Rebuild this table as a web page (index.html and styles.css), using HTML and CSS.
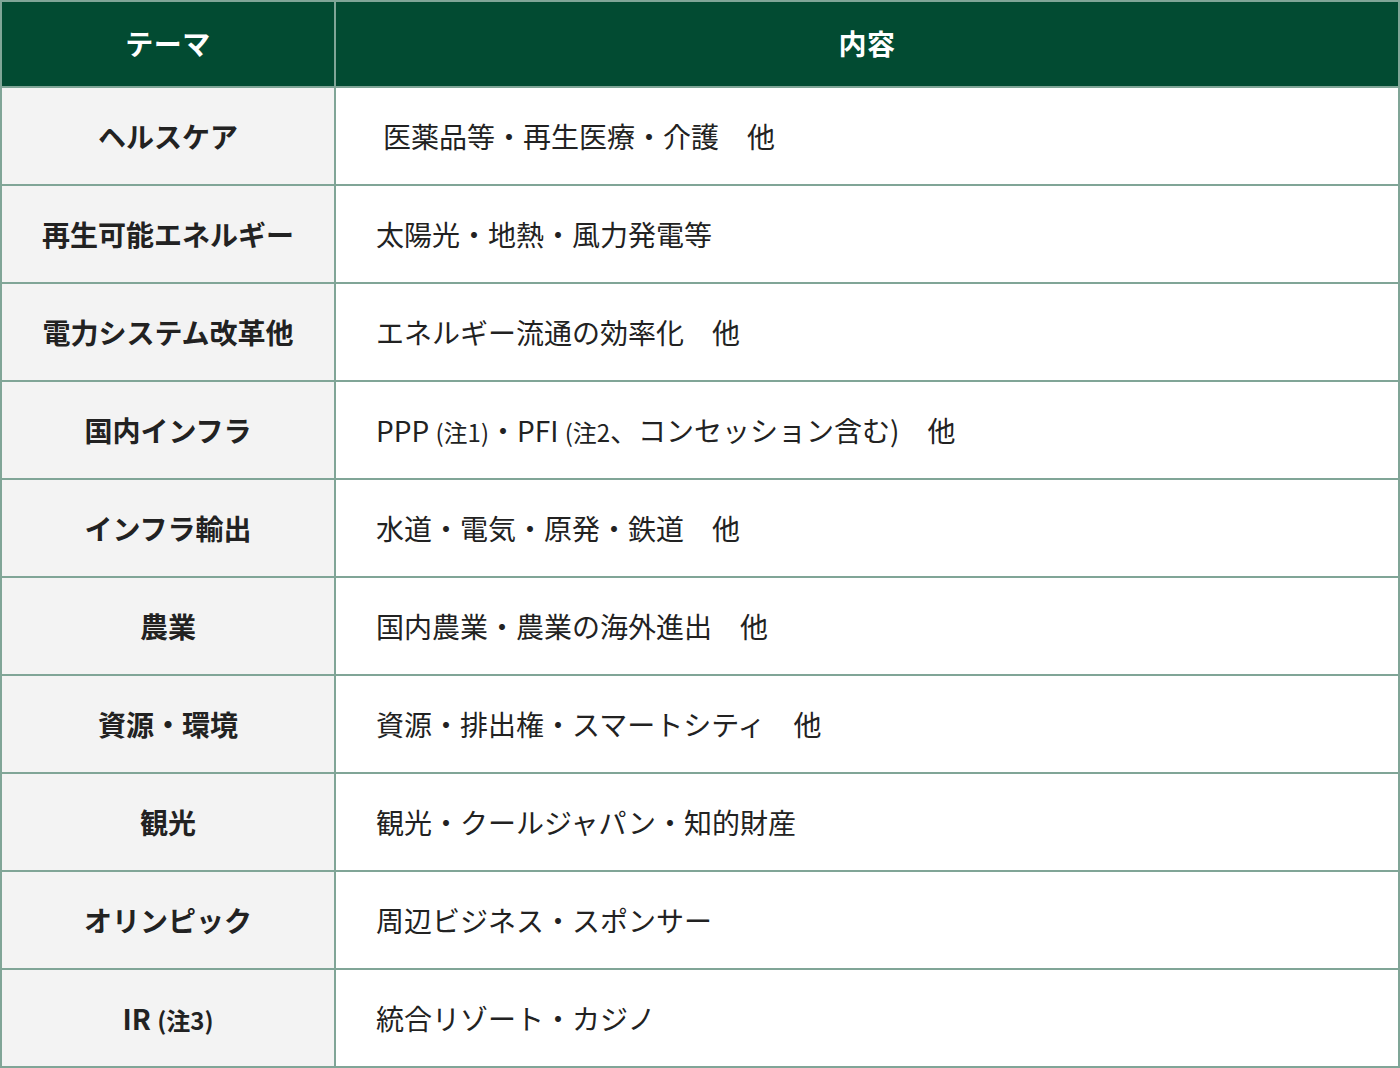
FILE: index.html
```html
<!DOCTYPE html>
<html lang="ja">
<head>
<meta charset="utf-8">
<link rel="stylesheet" href="styles.css">
</head>
<body>
<table class="theme-table">
  <thead>
    <tr><th class="col-theme">テーマ</th><th class="col-content">内容</th></tr>
  </thead>
  <tbody>
    <tr><th>ヘルスケア</th><td class="indent">医薬品等・再生医療・介護　他</td></tr>
    <tr><th>再生可能エネルギー</th><td>太陽光・地熱・風力発電等</td></tr>
    <tr><th>電力システム改革他</th><td>エネルギー流通の効率化　他</td></tr>
    <tr><th>国内インフラ</th><td>PPP <span class="note">(注1)</span>・PFI <span class="note">(注2</span>、コンセッション含む)　他</td></tr>
    <tr><th>インフラ輸出</th><td>水道・電気・原発・鉄道　他</td></tr>
    <tr><th>農業</th><td>国内農業・農業の海外進出　他</td></tr>
    <tr><th>資源・環境</th><td>資源・排出権・スマートシティ　他</td></tr>
    <tr><th>観光</th><td>観光・クールジャパン・知的財産</td></tr>
    <tr><th>オリンピック</th><td>周辺ビジネス・スポンサー</td></tr>
    <tr><th>IR <span class="note">(注3)</span></th><td>統合リゾート・カジノ</td></tr>
  </tbody>
</table>
</body>
</html>
```
FILE: styles.css
```css
html, body {
  margin: 0;
  padding: 0;
  background: #ffffff;
}
body {
  font-family: "Noto Sans CJK JP", "Noto Sans", sans-serif;
  color: #222222;
}
.theme-table {
  width: 1400px;
  border-collapse: collapse;
  table-layout: fixed;
}
.theme-table th,
.theme-table td {
  border: 2px solid #80a597;
  padding: 0;
  font-size: 28px;
  line-height: 1.2;
}
.col-theme {
  width: 332px;
}
.theme-table thead th {
  background: #024b32;
  color: #ffffff;
  font-weight: 700;
  height: 84px;
  text-align: center;
  letter-spacing: 0.02em;
}
.theme-table tbody th {
  background: #f3f3f3;
  font-weight: 700;
  text-align: center;
  height: 94px;
  padding-top: 2px;
}
.theme-table tbody td {
  background: #ffffff;
  font-weight: 400;
  text-align: left;
  padding-left: 40px;
  height: 94px;
  padding-top: 2px;
}
.theme-table tbody td.indent {
  padding-left: 47px;
}
.note {
  font-size: 24px;
}
```
